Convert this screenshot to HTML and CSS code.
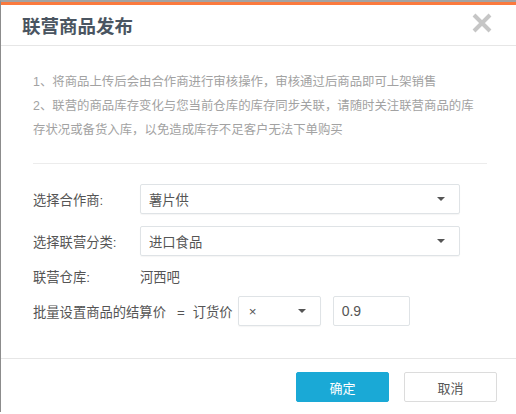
FILE: index.html
```html
<!DOCTYPE html>
<html lang="zh">
<head>
<meta charset="utf-8">
<link rel="stylesheet" href="styles.css">
</head>
<body>
<div class="frame">
  <div class="dialog">
    <div class="header">
      <h1 class="title">联营商品发布</h1>
      <span class="close" aria-label="关闭">
        <svg width="20" height="20" viewBox="0 0 20 20"><path d="M2 2 L18 18 M18 2 L2 18" stroke="#c6c6c6" stroke-width="4" stroke-linecap="butt" fill="none"/></svg>
      </span>
    </div>
    <div class="body">
      <div class="notes">
        <p>1、将商品上传后会由合作商进行审核操作，审核通过后商品即可上架销售</p>
        <p>2、联营的商品库存变化与您当前仓库的库存同步关联，请随时关注联营商品的库存状况或备货入库，以免造成库存不足客户无法下单购买</p>
      </div>
      <div class="divider"></div>
      <div class="form">
        <div class="row">
          <span class="label">选择合作商:</span>
          <div class="select wide"><span>薯片供</span><i class="caret"></i></div>
        </div>
        <div class="row">
          <span class="label">选择联营分类:</span>
          <div class="select wide"><span>进口食品</span><i class="caret"></i></div>
        </div>
        <div class="row plain">
          <span class="label">联营仓库:</span>
          <span class="value">河西吧</span>
        </div>
        <div class="row">
          <span class="formula">批量设置商品的结算价<span class="eq">=</span>订货价</span>
          <div class="select small"><span>×</span><i class="caret"></i></div>
          <div class="input">0.9</div>
        </div>
      </div>
    </div>
    <div class="footer">
      <button class="btn primary">确定</button>
      <button class="btn">取消</button>
    </div>
  </div>
</div>
</body>
</html>
```

FILE: styles.css
```css
html, body {
  margin: 0;
  padding: 0;
  background: #ffffff;
}
body {
  font-family: "Liberation Sans", "Noto Sans CJK SC", sans-serif;
  width: 516px;
  height: 414px;
  overflow: hidden;
}
.frame {
  border-top: 2px solid #a3a3a3;
  border-left: 1px solid #8c8c8c;
  height: 412px;
  box-sizing: border-box;
}
.dialog {
  border-top: 3px solid #fb7a3e;
  background: #fff;
  height: 410px;
  box-sizing: border-box;
  display: flex;
  flex-direction: column;
}
.header {
  height: 41px;
  flex: none;
  border-bottom: 1px solid #e6e6e6;
  display: flex;
  align-items: center;
  justify-content: space-between;
  padding: 0 24px 0 21px;
  box-sizing: border-box;
}
.title {
  margin: 0;
  font-size: 18.5px;
  font-weight: bold;
  color: #4a5561;
  line-height: 20px;
  padding-top: 3px;
}
.close {
  display: flex;
  margin-top: -5px;
}
.body {
  padding: 24px 29px 0 32px;
  height: 313px;
  flex: none;
  box-sizing: border-box;
  border-bottom: 1px solid #e6e6e6;
}
.notes {
  width: 446px;
}
.notes p {
  margin: 0;
  font-size: 12.4px;
  line-height: 24px;
  color: #a2a2a2;
}
.divider {
  height: 1px;
  background: #ececec;
  margin-top: 21px;
}
.form {
  padding-top: 20px;
  display: flex;
  flex-direction: column;
}
.row {
  display: flex;
  align-items: center;
  height: 30px;
  font-size: 13.3px;
  color: #555;
}
.row + .row {
  margin-top: 12px;
}
.row.plain {
  height: 40px;
  margin-top: 0;
}
.row.plain + .row {
  margin-top: 0;
}
.label {
  width: 107px;
  flex: none;
}
.value {
  color: #555;
}
.select {
  height: 30px;
  box-sizing: border-box;
  border: 1px solid #dfe3e6;
  border-radius: 2px;
  display: flex;
  align-items: center;
  justify-content: space-between;
  padding: 0 14px 0 8px;
  color: #555;
  box-shadow: 0 1px 1px rgba(0,0,0,0.04);
}
.select.wide {
  width: 320px;
}
.select.small {
  width: 83px;
  padding-left: 10px;
  margin-left: 5px;
}
.caret {
  width: 0;
  height: 0;
  border-left: 4px solid transparent;
  border-right: 4px solid transparent;
  border-top: 4px solid #555;
}
.formula {
  white-space: nowrap;
}
.eq {
  margin: 0 8px 0 11px;
}
.input {
  width: 77px;
  height: 30px;
  box-sizing: border-box;
  border: 1px solid #dfe3e6;
  border-radius: 2px;
  margin-left: 12px;
  display: flex;
  align-items: center;
  padding-left: 8px;
  color: #555;
  font-size: 14px;
}
.footer {
  display: flex;
  justify-content: flex-end;
  gap: 15px;
  padding: 13px 19px 0 0;
}
.btn {
  width: 93px;
  height: 30px;
  border: 1px solid #dcdcdc;
  border-radius: 2px;
  background: #fff;
  color: #555;
  font-family: "Liberation Sans", "Noto Sans CJK SC", sans-serif;
  font-size: 13px;
  padding: 0;
}
.btn.primary {
  background: #1aa9d6;
  border-color: #1aa9d6;
  color: #fff;
}
```
